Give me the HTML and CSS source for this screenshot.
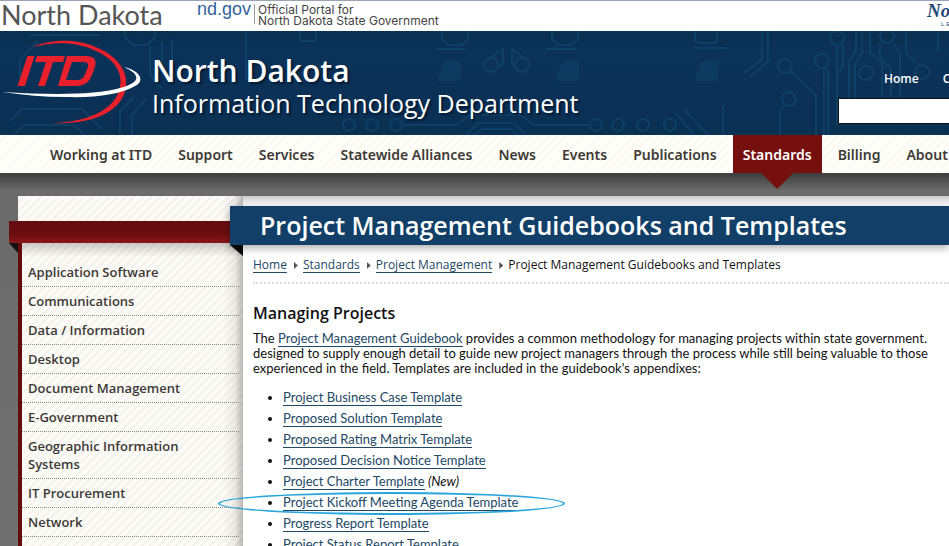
FILE: index.html
```html
<!DOCTYPE html>
<html lang="en">
<head>
<meta charset="utf-8">
<title>Project Management Guidebooks and Templates</title>
<link rel="stylesheet" href="styles.css">
</head>
<body>
<div class="topbar">
  <a class="state" href="#">North Dakota</a>
  <a class="ndgov" href="#">nd.gov</a>
  <p class="portal">Official Portal for<br>North Dakota State Government</p>
  <a class="legendary" href="#"><span class="legendary-name">North</span><span class="legendary-tag">LEGENDARY</span></a>
</div>
<header class="header">
  <svg class="circuit" viewBox="0 0 949 104" preserveAspectRatio="xMinYMin slice" aria-hidden="true">
    <g fill="none" stroke="#134f73" stroke-width="2" opacity=".5">
      <path d="M125 0v6l8 8h14l8-8V0M150 14v30l12 14M162 10v30M172 8v28M246 0v50M300 0v10h16V0M442 0v8l6 6h14l6-6V0M436 18h30M552 0v8l6 6h14l6-6V0M546 18h30M695 0v8q0 4 4 4h14q4 0 4-4V0M692 17h34M762 0v28l-18 14M768 0v30l-18 16"/>
      <circle cx="491" cy="34" r="7"/><circle cx="522" cy="34" r="7"/>
      <path d="M485 30l18-12v14l-5 4M528 30l-16-12v14l4 4"/>
      <circle cx="785" cy="35" r="7"/><circle cx="822" cy="30" r="7"/><circle cx="789" cy="68" r="7"/><circle cx="837" cy="7" r="7"/><circle cx="887" cy="5" r="7"/><circle cx="866" cy="42" r="7"/><circle cx="922" cy="41" r="7"/>
      <path d="M790 40l26 24v40M824 38v66M828 38v66M784 74l-4 6v24M837 14v60M843 14v20l-6 10v50M856 0v20l-7 10v54M862 0v22l-7 12v40M870 0v22l12 10v40M880 12v14l11 12v28M894 12l6 12v42M906 0v22l10 10M938 0v20"/>
      <circle cx="349" cy="94" r="6"/><circle cx="372" cy="94" r="6"/><circle cx="396" cy="94" r="6"/><circle cx="596" cy="94" r="6"/><circle cx="618" cy="94" r="6"/><circle cx="643" cy="94" r="6"/><circle cx="670" cy="94" r="6"/>
      <path d="M402 94h54l14-10h50l14 10h56M466 104l12-12h36l12 12M474 104l8-6h28l8 6M676 82l18 22M684 78l24 26M723 75v29"/>
      <path d="M10 90l12-12h60l20 20M14 104l10-10h50l10 10M120 104V80l14-14M132 104V84l14-16M30 4h70M38 10l-18 18v20"/>
    </g>
    <path d="M437 50l8-20h16v20zM555 50l8-20h16v20zM694 50l8-20h16v20z" fill="#134f73" opacity=".3"/>
  </svg>
  <svg class="logo" viewBox="0 0 142 96" role="img" aria-label="ITD">
    <path d="M33 16C50 8 77 7 98 17c20 9 30 23 28 39-3 23-31 38-74 36 37-1 64-14 68-36 3-15-6-28-24-36C78 11 56 10 33 16z" fill="#e8202b"/>
    <g fill="#e8202b"><path d="M27.500 25h7L25 55h-7.500z"/><path d="M37 25h28l-2 6H53l-8 24h-7l8-24H35z"/><path fill-rule="evenodd" d="M67 25h19q12 0 9 11l-3 8q-4 11-15 11H58zm5 6-6 18h11q6 0 8-6l3-7q1-5-5-5z"/></g>
    <path d="M2 61c50 3 94 3 118-4 20-5 22-13 4-21 17 4 21 14 11 19-13 8-39 12-69 11C44 66 24 64 2 61z" fill="#fff"/>
  </svg>
  <div class="brand">
    <strong class="brand-top">North Dakota</strong>
    <span class="brand-sub">Information Technology Department</span>
  </div>
  <div class="tools">
    <div class="tool-links"><a href="#">Home</a><a href="#">Contact</a></div>
    <input class="search" type="text" aria-label="Search">
  </div>
</header>
<nav class="nav">
  <a href="#">Working at ITD</a><a href="#">Support</a><a href="#">Services</a><a href="#">Statewide Alliances</a><a href="#">News</a><a href="#">Events</a><a href="#">Publications</a><a class="active" href="#">Standards</a><a href="#">Billing</a><a href="#">About</a>
</nav>
<div class="page">
  <aside class="side">
    <div class="side-ribbon"></div>
    <ul class="side-list">
      <li><a href="#">Application Software</a></li>
      <li><a href="#">Communications</a></li>
      <li><a href="#">Data / Information</a></li>
      <li><a href="#">Desktop</a></li>
      <li><a href="#">Document Management</a></li>
      <li><a href="#">E-Government</a></li>
      <li><a href="#">Geographic Information Systems</a></li>
      <li><a href="#">IT Procurement</a></li>
      <li><a href="#">Network</a></li>
    </ul>
  </aside>
  <main class="main">
    <h1 class="title">Project Management Guidebooks and Templates</h1>
    <div class="content">
      <div class="crumbs"><a href="#">Home</a><i></i><a href="#">Standards</a><i></i><a href="#">Project Management</a><i></i><span>Project Management Guidebooks and Templates</span></div>
      <h2>Managing Projects</h2>
      <p class="intro">The <a href="#">Project Management Guidebook</a> provides a common methodology for managing projects within state government.<br>designed to supply enough detail to guide new project managers through the process while still being valuable to those<br>experienced in the field. Templates are included in the guidebook's appendixes:</p>
      <ul class="docs">
        <li><a href="#">Project Business Case Template</a></li>
        <li><a href="#">Proposed Solution Template</a></li>
        <li><a href="#">Proposed Rating Matrix Template</a></li>
        <li><a href="#">Proposed Decision Notice Template</a></li>
        <li><a href="#">Project Charter Template</a> <em>(New)</em></li>
        <li class="marked"><a href="#">Project Kickoff Meeting Agenda Template</a></li>
        <li><a href="#">Progress Report Template</a></li>
        <li><a href="#">Project Status Report Template</a></li>
      </ul>
    </div>
  </main>
</div>
</body>
</html>
```
FILE: styles.css
```css
*, *::before, *::after { box-sizing: border-box; }
body {
  margin: 0;
  height: 100vh;
  overflow: hidden;
  display: flex;
  flex-direction: column;
  font: 13px/15px "Open Sans", "Noto Sans", sans-serif;
  color: #111;
  background: #6b6b6b;
}
a { color: inherit; text-decoration: none; }
ul, p, h1, h2 { margin: 0; padding: 0; }

.topbar {
  flex: none;
  height: 31px;
  display: flex;
  border-top: 1px solid #9aa3b5;
  background: #fff;
  overflow: hidden;
  white-space: nowrap;
}
.state { width: 197px; padding-left: 1px; font: 27px/27px Lato, sans-serif; color: #555; }
.ndgov { width: 57px; font: 18px/16px "Liberation Sans", sans-serif; color: #30639a; }
.portal { height: 20px; margin-top: 3px; padding-left: 3px; border-left: 1px solid #999; font: 12px/11px Inter, sans-serif; color: #444; flex: 1; }
.legendary { width: 22px; display: flex; flex-direction: column; color: #23487c; }
.legendary-name { font: italic bold 19px/20px "Liberation Serif", serif; }
.legendary-tag { padding-left: 14px; font: 6px/6px "Liberation Sans", sans-serif; letter-spacing: 2px; }

.header {
  flex: none;
  position: relative;
  height: 104px;
  display: flex;
  overflow: hidden;
  background: linear-gradient(#09304f, #0b3259 20%, #0b3055 80%, #083152);
  color: #fff;
  white-space: nowrap;
}
.circuit { position: absolute; left: 0; top: 0; width: 100%; height: 100%; }
.logo { position: relative; flex: none; width: 142px; height: 96px; }
.brand {
  position: relative;
  flex: 1;
  padding: 24px 0 0 10px;
  display: flex;
  flex-direction: column;
  text-shadow: 2px 2px 2px #031a33;
}
.brand-top { font-size: 30px; line-height: 32px; font-weight: 600; }
.brand-sub { font-size: 25px; line-height: 32px; }
.tools { position: relative; width: 111px; padding-top: 40px; }
.tool-links { display: flex; gap: 24px; padding-left: 46px; margin-bottom: 11px; font-weight: 600; font-size: 12px; line-height: 16px; }
.search { display: block; width: 200px; height: 26px; border: 1px solid #111; background: #fff; }

.nav {
  flex: none;
  position: relative;
  z-index: 2;
  height: 38px;
  display: flex;
  gap: 6px;
  padding-left: 40px;
  background: repeating-linear-gradient(135deg, #fffffa 0 4px, #fbf9f1 4px 6px);
  white-space: nowrap;
}
.nav a { padding: 0 10px; font-family: "Noto Sans", sans-serif; font-size: 14px; line-height: 39px; font-weight: 600; color: #3d3a36; }
.nav .active { position: relative; background: #75100f; color: #fff; }
.active::after {
  content: "";
  position: absolute;
  left: calc(50% - 16px);
  top: 38px;
  width: 32px;
  height: 16px;
  background: #75100f;
  clip-path: polygon(0 0, 100% 0, 50% 100%);
}

.page {
  flex: 1;
  display: flex;
  min-height: 0;
  padding: 23px 0 0 18px;
  background: linear-gradient(#3d3d3d, #6b6b6b 18px, #707070);
}
.side {
  width: 225px;
  flex: none;
  padding-top: 25px;
  background:
    linear-gradient(to left, #0004, #0001 8px, #0000 20px),
    repeating-linear-gradient(135deg, #fcfbf7 0 4px, #f4f2ec 4px 6px);
}
.side-ribbon {
  position: relative;
  height: 22px;
  margin: 0 0 0 -9px;
  background: linear-gradient(#650c0e, #6b0e10 60%, #8a1819);
}
.side-ribbon::after {
  content: "";
  position: absolute;
  left: 0;
  top: 22px;
  width: 9px;
  height: 10px;
  background: #111;
  clip-path: polygon(0 0, 100% 0, 100% 100%);
}
.side-list {
  list-style: none;
  height: 100%;
  padding: 15px 4px 0 0;
  border-left: 4px solid #650a0d;
  background: linear-gradient(#0003, #0000 14px);
}
.side-list li {
  padding: 5px 30px 5px 6px;
  border-bottom: 1px dotted #8b8983;
  font-size: 13px;
  line-height: 18px;
  font-weight: 600;
  color: #3d3a36;
}

.main {
  flex: 1;
  min-width: 0;
  padding-top: 10px;
  background: linear-gradient(#ccc, #fff 10px);
  white-space: nowrap;
}
.title {
  position: relative;
  height: 39px;
  margin-left: -13px;
  padding-left: 30px;
  background: #113f68;
  box-shadow: 0 3px 8px #0005;
  color: #fff;
  font-size: 25px;
  line-height: 39px;
  font-weight: 600;
}
.title::after {
  content: "";
  position: absolute;
  left: 0;
  top: 39px;
  width: 13px;
  height: 11px;
  background: #080808;
  clip-path: polygon(0 0, 100% 0, 100% 100%);
}
.content { margin-left: -30px; padding: 12px 0 0 40px; overflow: hidden; }
.content a { color: #234864; border-bottom: 1px solid #234864; }
.crumbs {
  display: flex;
  align-items: flex-start;
  height: 27px;
  border-bottom: 2px dotted #ddd;
  font-size: 12px;
}
.crumbs i {
  margin: 5px 5px 0 7px;
  width: 4px;
  height: 7px;
  background: #555;
  clip-path: polygon(0 0, 100% 50%, 0 100%);
}
h2 { margin: 19px 0 8px; font-size: 16px; line-height: 20px; font-weight: 600; }
.intro { font-family: Lato, sans-serif; font-size: 13px; }
.docs { margin-top: 11px; padding-left: 30px; font-family: Lato, sans-serif; font-size: 13px; line-height: 21px; }
.docs a { display: inline-block; line-height: 15px; }
.marked { position: relative; }
.marked::after {
  content: "";
  position: absolute;
  left: -65px;
  top: 0;
  width: 347px;
  height: 23px;
  border: 2px solid #27a5dc;
  border-radius: 50%;
}
```
